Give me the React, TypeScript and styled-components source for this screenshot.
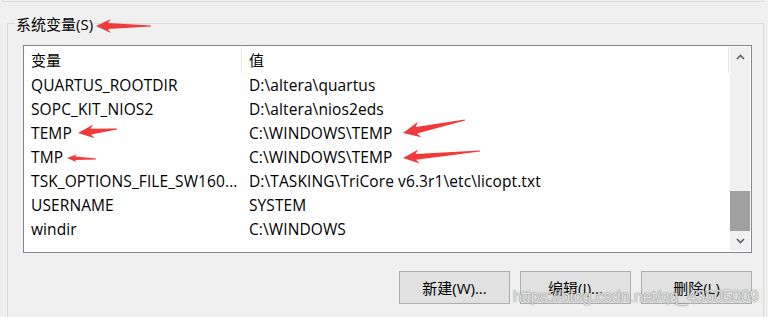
import React from "react";
import styled, { createGlobalStyle } from "styled-components";

const GlobalStyle = createGlobalStyle`
  html, body { margin: 0; padding: 0; }
  body {
    background: #f0f0f0;
    width: 768px;
    height: 317px;
    overflow: hidden;
    font-family: "Open Sans", "Noto Sans CJK SC", sans-serif;
    color: #000;
  }
`;

const Page = styled.div`
  position: relative;
  width: 768px;
  height: 317px;
  overflow: hidden;
`;

const PrevGroupEdge = styled.div`
  margin: 0 4px 0 2px;
  height: 1px;
  border: 1px solid #dcdcdc;
  border-top: none;
`;

const GroupBox = styled.section`
  margin: 21px 4px 0 7px;
  height: 400px;
  border: 1px solid #dcdcdc;
`;

const GroupTitle = styled.h2`
  width: fit-content;
  margin: -10px 0 0 7px;
  padding: 0 1px;
  height: 20px;
  background: #f0f0f0;
  font-size: 15px;
  font-weight: normal;
  line-height: 20px;
`;

const GroupBody = styled.div`
  padding: 11px 11px 0 15px;
`;

const ListView = styled.div`
  display: flex;
  height: 206px;
  border: 1px solid #828790;
  background: #fff;
`;

const Table = styled.div`
  flex: 1;
  display: flex;
  flex-direction: column;
  padding-top: 1px;
`;

const HeaderRow = styled.div`
  display: grid;
  grid-template-columns: 218px 487px;
  height: 26px;
`;

const HeaderCell = styled.div`
  border-right: 1px solid #e5e5e5;
  padding-left: 7px;
  font-size: 15px;
  line-height: 26px;
`;

const Row = styled.div`
  display: grid;
  grid-template-columns: 218px 487px;
  height: 24px;
  font-size: 15.5px;
  letter-spacing: 0.1px;
  line-height: 24px;
`;

const Cell = styled.div`
  padding-left: 7px;
  white-space: nowrap;
  overflow: hidden;
`;

const ScrollBar = styled.div`
  width: 20px;
  margin: 1px 1px 1px 0;
  background: #f0f0f0;
  display: flex;
  flex-direction: column;
`;

const ScrollButton = styled.div`
  height: 20px;
  display: flex;
  align-items: center;
  justify-content: center;
`;

const ScrollTrack = styled.div`
  flex: 1;
  display: flex;
  flex-direction: column;
  justify-content: flex-end;
`;

const Thumb = styled.div`
  height: 40px;
  background: #a0a0a0;
`;

const ButtonRow = styled.div`
  display: flex;
  justify-content: flex-end;
  gap: 10px;
  margin-top: 18px;
`;

const Button = styled.button`
  width: 111px;
  height: 33px;
  background: #e1e1e1;
  border: 1px solid #adadad;
  font-family: "Open Sans", "Noto Sans CJK SC", sans-serif;
  font-size: 15px;
  color: #000;
  padding: 0;
`;

const Watermark = styled.div`
  position: absolute;
  left: 513px;
  top: 288px;
  font-family: "Liberation Sans", Arial, sans-serif;
  font-size: 16px;
  color: rgba(240, 240, 240, 0.92);
  text-shadow: 0 0 1px rgba(90, 90, 90, 0.9), 0 0 2px rgba(150, 150, 150, 0.6);
  white-space: nowrap;
`;

const Overlay = styled.svg`
  position: absolute;
  left: 0;
  top: 0;
  pointer-events: none;
`;

type ArrowProps = { tx: number; ty: number; ex: number; ey: number; h: number; w: number };

function arrowPoints({ tx, ty, ex, ey, h, w }: ArrowProps) {
  const dx = ex - tx;
  const dy = ey - ty;
  const L = Math.hypot(dx, dy);
  const ux = dx / L;
  const uy = dy / L;
  const px = -uy;
  const py = ux;
  const pt = (u: number, v: number) =>
    `${(tx + ux * u + px * v).toFixed(2)},${(ty + uy * u + py * v).toFixed(2)}`;
  return [
    pt(0, 0),
    pt(h, w),
    pt(h * 0.8, w * 0.42),
    pt(L, 0.4),
    pt(L, -0.4),
    pt(h * 0.8, -w * 0.42),
    pt(h, -w),
  ].join(" ");
}

const arrows: ArrowProps[] = [
  { tx: 96, ty: 26, ex: 151, ey: 26, h: 15, w: 7 },
  { tx: 78, ty: 133, ex: 117, ey: 129, h: 16, w: 7 },
  { tx: 67, ty: 158, ex: 96, ey: 159, h: 10, w: 4 },
  { tx: 403, ty: 133, ex: 465, ey: 120, h: 17, w: 8 },
  { tx: 403, ty: 158, ex: 480, ey: 151, h: 16, w: 7 },
];

const rows: [string, string][] = [
  ["QUARTUS_ROOTDIR", "D:\\altera\\quartus"],
  ["SOPC_KIT_NIOS2", "D:\\altera\\nios2eds"],
  ["TEMP", "C:\\WINDOWS\\TEMP"],
  ["TMP", "C:\\WINDOWS\\TEMP"],
  ["TSK_OPTIONS_FILE_SW160...", "D:\\TASKING\\TriCore v6.3r1\\etc\\licopt.txt"],
  ["USERNAME", "SYSTEM"],
  ["windir", "C:\\WINDOWS"],
];

const Chevron = ({ up }: { up: boolean }) => (
  <svg width="9" height="6" viewBox="0 0 9 6">
    <path
      d={up ? "M1 5 L4.5 1.5 L8 5" : "M1 1 L4.5 4.5 L8 1"}
      fill="none"
      stroke="#606060"
      strokeWidth="1.6"
    />
  </svg>
);

export default function App() {
  return (
    <Page>
      <GlobalStyle />
      <PrevGroupEdge />
      <GroupBox>
        <GroupTitle>系统变量(S)</GroupTitle>
        <GroupBody>
          <ListView>
            <Table>
              <HeaderRow>
                <HeaderCell>变量</HeaderCell>
                <HeaderCell>值</HeaderCell>
              </HeaderRow>
              {rows.map(([k, v], i) => (
                <Row key={i}>
                  <Cell>{k}</Cell>
                  <Cell>{v}</Cell>
                </Row>
              ))}
            </Table>
            <ScrollBar>
              <ScrollButton>
                <Chevron up />
              </ScrollButton>
              <ScrollTrack>
                <Thumb />
              </ScrollTrack>
              <ScrollButton>
                <Chevron up={false} />
              </ScrollButton>
            </ScrollBar>
          </ListView>
          <ButtonRow>
            <Button>新建(W)...</Button>
            <Button>编辑(I)...</Button>
            <Button>删除(L)</Button>
          </ButtonRow>
        </GroupBody>
      </GroupBox>
      <Watermark>https://blog.csdn.net/qq_43605009</Watermark>
      <Overlay width="768" height="317" viewBox="0 0 768 317">
        {arrows.map((a, i) => (
          <polygon key={i} points={arrowPoints(a)} fill="#f03a3a" />
        ))}
      </Overlay>
    </Page>
  );
}
